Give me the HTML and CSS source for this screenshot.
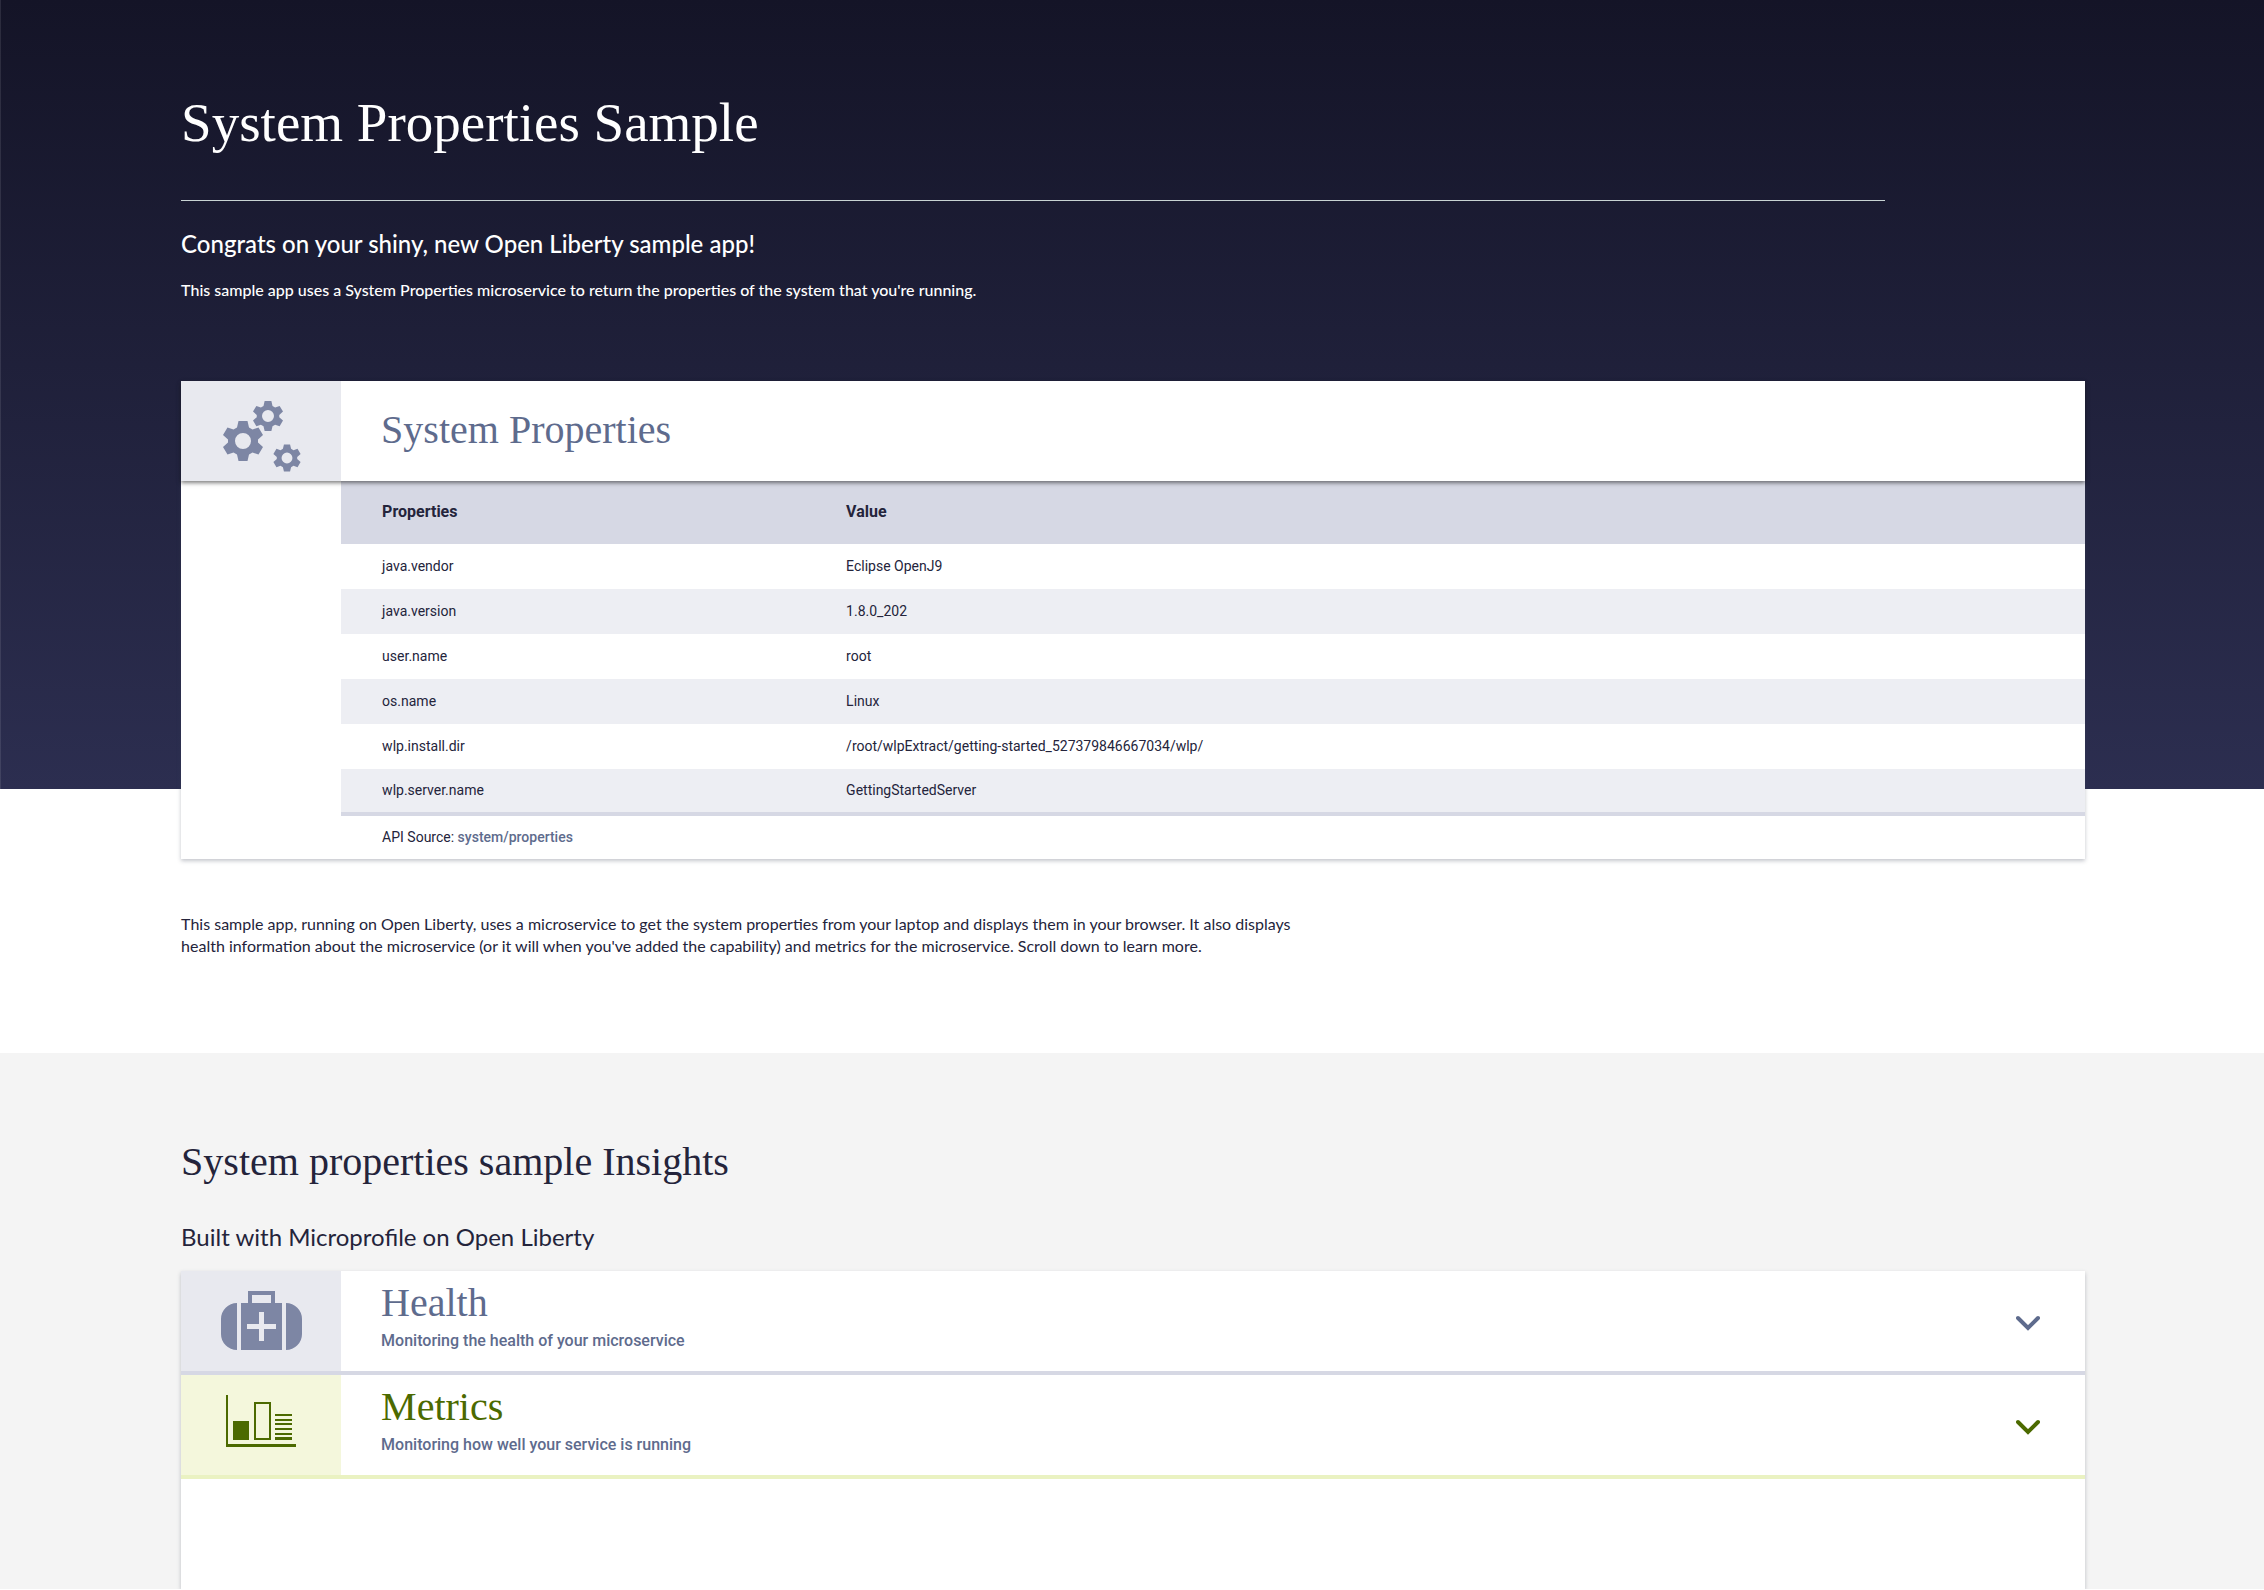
FILE: index.html
```html
<!DOCTYPE html>
<html lang="en">
<head>
<meta charset="utf-8">
<title>System Properties Sample</title>
<link rel="stylesheet" href="styles.css">
</head>
<body>
<header class="intro">
  <h1 class="intro-title">System Properties Sample</h1>
  <p class="intro-lead">Congrats on your shiny, new Open Liberty sample app!</p>
  <p class="intro-text">This sample app uses a System Properties microservice to return the properties of the system that you're running.</p>
</header>

<main>
  <section class="overview">
    <div class="card properties">
      <div class="card-head raised">
        <div class="icon-cell">
          <svg class="icon" viewBox="0 0 100 100" aria-hidden="true">
            <defs>
              <path id="gear" fill-rule="evenodd" d="M-4.500-20H4.500L6-13.500L9.500-11.500L15.500-13.500L20-6L15-1.500V1.500L20 6L15.500 13.500L9.500 11.500L6 13.500L4.500 20H-4.500L-6 13.500L-9.500 11.500L-15.500 13.500L-20 6L-15 1.500V-1.500L-20-6L-15.500-13.500L-9.500-11.500L-6-13.500ZM8 0A8 8 0 1 0-8 0A8 8 0 1 0 8 0Z"/>
            </defs>
            <use href="#gear" transform="translate(32 60)"/>
            <use href="#gear" transform="translate(57 35) scale(.75)"/>
            <use href="#gear" transform="translate(76 77) scale(.68)"/>
          </svg>
        </div>
        <h2 class="card-title">System Properties</h2>
      </div>
      <div class="table-wrap">
        <table class="table">
          <thead>
            <tr><th class="name-col" scope="col">Properties</th><th scope="col">Value</th></tr>
          </thead>
          <tbody>
            <tr><td>java.vendor</td><td>Eclipse OpenJ9</td></tr>
            <tr><td>java.version</td><td>1.8.0_202</td></tr>
            <tr><td>user.name</td><td>root</td></tr>
            <tr><td>os.name</td><td>Linux</td></tr>
            <tr><td>wlp.install.dir</td><td>/root/wlpExtract/getting-started_527379846667034/wlp/</td></tr>
            <tr><td>wlp.server.name</td><td>GettingStartedServer</td></tr>
          </tbody>
        </table>
        <p class="source">API Source: <a class="source-link" href="system/properties">system/properties</a></p>
      </div>
    </div>
    <p class="overview-text">This sample app, running on Open Liberty, uses a microservice to get the system properties from your laptop and displays them in your browser. It also displays health information about the microservice (or it will when you've added the capability) and metrics for the microservice. Scroll down to learn more.</p>
  </section>

  <section class="insights">
    <h2 class="insights-title">System properties sample Insights</h2>
    <h3 class="insights-sub">Built with Microprofile on Open Liberty</h3>
    <div class="card panels">
      <button class="card-head panel" type="button">
        <span class="icon-cell">
          <svg class="icon" viewBox="0 0 100 100" aria-hidden="true">
            <path d="M26 32V79A16 16 0 0 1 10 63V48A16 16 0 0 1 26 32ZM75 32A16 16 0 0 1 91 48V63A16 16 0 0 1 75 79Z"/>
            <path fill-rule="evenodd" d="M37 32V20H64V32H71V79H30V32ZM41 32H60V24H41ZM48 41V53H36V58H48V70H53V58H65V53H53V41Z"/>
          </svg>
        </span>
        <span class="panel-text"><span class="panel-title">Health</span><span class="panel-sub">Monitoring the health of your microservice</span></span>
        <svg class="chevron" viewBox="0 0 24 16" aria-hidden="true"><path d="M2 3L12 13L22 3"/></svg>
      </button>
      <button class="card-head panel metrics" type="button">
        <span class="icon-cell">
          <svg class="icon" viewBox="0 0 100 100" aria-hidden="true">
            <path d="M15 20H17V69H85V72H15ZM22 46H38V65H22Z"/>
            <path fill-rule="evenodd" d="M43 27H60V65H43ZM45 29V63H58V29Z"/>
            <path d="M64 39H81V41H64ZM64 44H81V46H64ZM64 48H81V50H64ZM64 53H81V55H64ZM64 58H81V60H64ZM64 62H81V65H64Z"/>
          </svg>
        </span>
        <span class="panel-text"><span class="panel-title">Metrics</span><span class="panel-sub">Monitoring how well your service is running</span></span>
        <svg class="chevron" viewBox="0 0 24 16" aria-hidden="true"><path d="M2 3L12 13L22 3"/></svg>
      </button>
      <div class="panel-body"></div>
    </div>
  </section>
</main>
</body>
</html>
```
FILE: styles.css
```css
* { box-sizing: border-box; }

body {
  margin: 0;
  color: #24243b;
  background: #fff;
  font-family: Lato, "Liberation Sans", sans-serif;
  font-size: 16px;
}

h1, h2, h3, p { margin: 0; }

.intro {
  height: 789px;
  padding: 88px 8% 0;
  color: #fff;
  background: linear-gradient(#141427, #2c2e50);
  box-shadow: inset 1px 0 rgba(255, 255, 255, 0.1);
}

.intro-title {
  max-width: 1704px;
  height: 113px;
  border-bottom: 1px solid #c8d3d3;
  font: 400 55px/70px "Liberation Serif", serif;
}

.intro-lead { margin-top: 27px; font-size: 24px; font-weight: 500; line-height: 32px; }
.intro-text { margin-top: 18px; font-weight: 500; line-height: 24px; }

.overview { padding: 0 179px 96px 8%; }

.card { background: #fff; box-shadow: 0 2px 4px rgba(63, 70, 89, 0.31); }
.properties { position: relative; margin-top: -408px; }

.card-head { display: flex; align-items: center; height: 100px; }
.raised { position: relative; box-shadow: 0 2px 4px rgba(0, 0, 0, 0.5); }

.icon-cell {
  display: flex;
  flex: none;
  align-items: center;
  justify-content: center;
  width: 160px;
  height: 100px;
  background: #e8e9ef;
}

.icon { width: 100px; height: 100px; fill: #7d86a4; }

.card-title { padding: 0 0 2px 40px; color: #5e6b8d; font: 400 40px/48px "Liberation Serif", serif; }

.table-wrap { padding-left: 160px; font-family: Roboto, sans-serif; }
.table { width: 100%; border-collapse: collapse; border-bottom: 4px solid #d6d8e4; font-size: 14px; }
.table th { height: 63px; padding: 0 41px 2px; background: #d6d8e4; font-size: 16px; font-weight: 700; text-align: left; }
.name-col { width: 464px; }
.table td { height: 45px; padding: 0 41px 1px; }
.table tbody tr:nth-child(even) { background: #edeef3; }
.source { padding: 0 41px; font-size: 14px; line-height: 43px; }
.source-link { color: #5e6b8d; font-weight: 500; text-decoration: none; }

.overview-text { max-width: 1140px; margin-top: 54px; line-height: 22px; }

.insights { padding: 84px 179px 0 8%; background: #f4f4f4; }
.insights-title { font: 400 40px/50px "Liberation Serif", serif; }
.insights-sub { margin: 34px 0 18px; font-size: 24px; font-weight: 400; line-height: 32px; }

.panel {
  width: 100%;
  height: 104px;
  padding: 0 45px 0 0;
  border: 0;
  border-bottom: 4px solid #d6d8e4;
  background: none;
  color: #5e6b8d;
  text-align: left;
}
.panel-text { display: flex; flex: 1; flex-direction: column; padding: 0 0 9px 40px; }
.panel-title { font: 400 40px/48px "Liberation Serif", serif; }
.panel-sub { font: 500 16px/28px Roboto, sans-serif; }
.chevron { width: 24px; height: 16px; margin-top: 4px; fill: none; stroke: currentColor; stroke-width: 4; stroke-linecap: round; }

.metrics { border-color: #eaf2c2; }
.metrics .icon-cell { background: #f4f7dc; }
.metrics .icon { fill: #4c6a00; }
.metrics .panel-title, .metrics .chevron { color: #4c6a00; }
.panel-body { height: 110px; }
```
